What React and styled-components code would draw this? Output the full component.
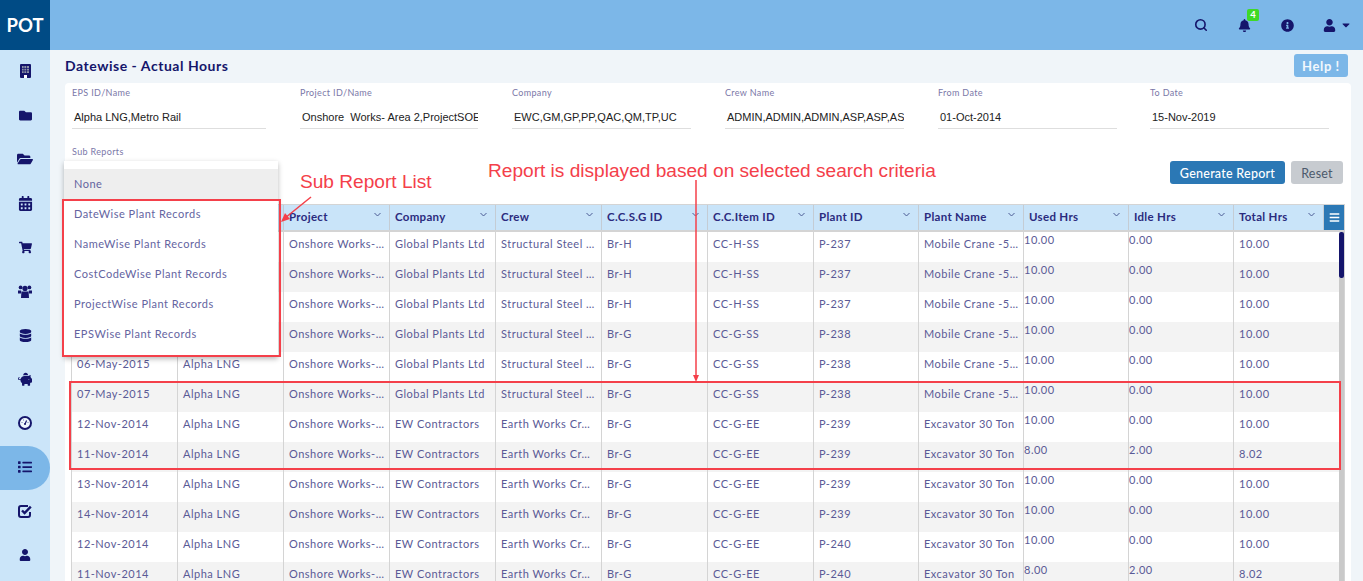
import React from 'react';
import styled, { createGlobalStyle } from 'styled-components';
import {
  FaBell, FaBuilding, FaCalendarAlt, FaCaretDown, FaBars, FaDatabase, FaFolder, FaFolderOpen, FaInfoCircle,
  FaList, FaPiggyBank, FaShoppingCart, FaUser,
} from 'react-icons/fa';
import { Search } from 'lucide-react';

const GlobalStyle = createGlobalStyle`
  html, body { margin: 0; padding: 0; height: 100%; overflow: hidden; }
  body { font-family: Lato, "Open Sans", sans-serif; background: #f0f5f9; }
  #root { height: 100%; }
  * { box-sizing: border-box; }
`;

const Page = styled.div`
  position: relative;
  width: 1363px;
  height: 581px;
  overflow: hidden;
  display: grid;
  grid-template-columns: 50px 1fr;
  grid-template-rows: 50px 1fr;
`;

const Logo = styled.div`
  background: #004b85;
  color: #fff;
  font-size: 18.5px;
  font-weight: 700;
  display: flex;
  align-items: center;
  justify-content: center;
`;

const TopBar = styled.header`
  background: #7cb7e8;
  color: #15156b;
  display: flex;
  align-items: center;
  justify-content: flex-end;
  padding-right: 11px;
`;

const TopIcon = styled.span`
  position: relative;
  display: flex;
  align-items: center;
  margin-left: ${p => p.$gap}px;
  font-size: 13px;
`;

const Caret = styled(FaCaretDown)`
  margin-left: 4px;
  font-size: 12px;
`;

const Badge = styled.span`
  position: absolute;
  top: -10px;
  left: 9px;
  width: 12px;
  height: 12px;
  background: #3fd926;
  border-radius: 2px;
  color: #fff;
  font-size: 9.5px;
  font-weight: 700;
  text-align: center;
  line-height: 11px;
`;

const Sidebar = styled.nav`
  background: #cbe5f9;
  display: flex;
  flex-direction: column;
`;

const SideItem = styled.div`
  height: 44px;
  flex-shrink: 0;
  display: flex;
  align-items: center;
  justify-content: center;
  padding-bottom: 2px;
  color: #15156b;
  font-size: ${p => p.$size}px;
  border-radius: 0 22px 22px 0;
  background: ${p => (p.$active ? '#7cb7e8' : 'transparent')};
`;

const Content = styled.main`
  min-width: 0;
  padding: 0 12px 0 15px;
  display: flex;
  flex-direction: column;
`;

const TitleRow = styled.div`
  height: 33px;
  display: flex;
  align-items: flex-start;
  justify-content: space-between;
  padding-right: 3px;
`;

const Title = styled.h1`
  margin: 7px 0 0;
  font-size: 14px;
  line-height: 17px;
  font-weight: 700;
  letter-spacing: 0.53px;
  color: #15156b;
`;

const HelpButton = styled.button`
  margin-top: 4px;
  width: 54px;
  height: 23px;
  border: 0;
  border-radius: 3px;
  background: #7cb7e8;
  color: #f2f8fd;
  font: 700 13px Lato, sans-serif;
  letter-spacing: 0.6px;
  padding: 0;
`;

const Panel = styled.section`
  background: #fff;
  border-radius: 4px 4px 0 0;
  flex: 1;
  min-height: 0;
  padding: 0 0 1px 6px;
  display: flex;
  flex-direction: column;
`;

const Filters = styled.div`
  display: flex;
  height: 52px;
  padding-left: 1px;
`;

const Filter = styled.div`
  width: ${p => p.$width}px;
  margin-right: ${p => p.$gap}px;
  padding-top: 4px;
`;

const FilterLabel = styled.div`
  font-size: 9px;
  line-height: 11px;
  letter-spacing: 0.35px;
  color: #7b78a8;
`;

const FilterValue = styled.div`
  margin-top: 7px;
  height: 24px;
  padding-left: 2px;
  border-bottom: 1px solid #dedede;
  font: 11px/24px "Liberation Sans", Arial, sans-serif;
  color: #222;
  white-space: pre;
  overflow: hidden;
`;

const SubRow = styled.div`
  height: 69px;
  display: flex;
  justify-content: space-between;
  padding-right: 8px;
`;

const SubLabel = styled(FilterLabel)`
  padding-top: 11px;
  padding-left: 1px;
`;

const Actions = styled.div`
  display: flex;
  gap: 6px;
  padding-top: 26px;
`;

const Button = styled.button`
  height: 23px;
  border: 0;
  border-radius: 3px;
  font: 12.5px Lato, sans-serif;
  letter-spacing: 0.25px;
  padding: 1px 0 0;
  width: ${p => p.$width}px;
  background: ${p => (p.$primary ? '#2b78b5' : '#c7cbd0')};
  color: ${p => (p.$primary ? '#fff' : '#4c5a6c')};
  font-weight: ${p => (p.$primary ? 500 : 400)};
`;

const Grid = styled.div`
  position: relative;
  flex: 1;
  min-height: 0;
  border: 1px solid #d4d4d4;
  overflow: hidden;
  width: 1274px;
`;

const HeadRow = styled.div`
  display: grid;
  grid-template-columns: ${p => p.$cols};
  height: 27px;
  background: #c9e4f9;
  border-bottom: 2px solid #d4d4d4;
`;

const HeadCell = styled.div`
  position: relative;
  padding-left: 5px;
  font-size: 11.5px;
  font-weight: 700;
  letter-spacing: 0.3px;
  line-height: 24px;
  color: #2b2b7e;
  border-right: 1px solid #c4ccd4;
  white-space: nowrap;
  overflow: hidden;
`;

const HeadChevron = styled.svg`
  position: absolute;
  top: 7px;
  right: 8px;
  width: 7px;
  height: 5px;
  fill: none;
  stroke: #4a5a94;
  stroke-width: 1;
`;

const MenuCell = styled.div`
  background: #2b78b5;
  color: #fff;
  font-size: 11px;
  display: flex;
  align-items: center;
  justify-content: center;
`;

const BodyRow = styled.div`
  display: grid;
  grid-template-columns: ${p => p.$cols};
  height: 30px;
  background: ${p => (p.$odd ? '#f3f3f3' : '#fff')};
`;

const Cell = styled.div`
  padding-left: ${p => (p.$top ? 0 : 5)}px;
  font-size: 11px;
  letter-spacing: 0.5px;
  line-height: ${p => (p.$top ? 15 : 24)}px;
  color: #5a5a96;
  border-right: 1px solid #d4d4d4;
  white-space: nowrap;
  overflow: hidden;
`;

const ScrollThumb = styled.div`
  position: absolute;
  top: 27px;
  right: 0;
  width: 5px;
  height: 46px;
  border-radius: 2px;
  background: #15156b;
`;

const ScrollTrack = styled.div`
  position: absolute;
  top: 73px;
  right: 0;
  bottom: 0;
  width: 5px;
  background: #c9c9c9;
`;

const Dropdown = styled.div`
  position: absolute;
  left: 64px;
  top: 161px;
  width: 214px;
  padding: 8px 0;
  background: #fff;
  box-shadow: 0 2px 5px rgba(0, 0, 0, 0.28);
`;

const DropItem = styled.div`
  height: 30px;
  padding-left: 10px;
  font-size: 11px;
  letter-spacing: 0.5px;
  line-height: 30px;
  color: #64649f;
  background: ${p => (p.$selected ? '#eeeeee' : 'transparent')};
`;

const RedBox = styled.div`
  position: absolute;
  left: ${p => p.$x}px;
  top: ${p => p.$y}px;
  width: ${p => p.$w}px;
  height: ${p => p.$h}px;
  border: 2px solid #f4404a;
`;

const Note = styled.div`
  position: absolute;
  left: ${p => p.$x}px;
  top: ${p => p.$y}px;
  font: 19.1px/20px "Liberation Sans", Arial, sans-serif;
  color: #f4404a;
  white-space: nowrap;
`;

const ArrowLayer = styled.svg`
  position: absolute;
  left: 0;
  top: 0;
  width: 1363px;
  height: 581px;
  pointer-events: none;
`;

const BuildingIcon = () => (
  <svg width="11" height="14" viewBox="0 0 11 14">
    <rect width="11" height="14" rx="1" fill="#15156b" />
    <rect x="2" y="2" width="7" height="7" fill="#8d93a8" />
    <path d="M4 2v7M6.5 2v7M2 4.5h7M2 6.8h7" stroke="#15156b" strokeWidth="0.7" />
    <rect x="4" y="11" width="3" height="3" fill="#fff" />
  </svg>
);

const UsersIcon = () => (
  <svg width="14" height="13" viewBox="0 0 14 13" fill="#15156b">
    <circle cx="2.6" cy="2.4" r="1.9" />
    <circle cx="11.4" cy="2.4" r="1.9" />
    <circle cx="7" cy="3.4" r="2.6" />
    <path d="M0 5.4h3.2L3 8.6H0zM14 5.4h-3.2l.2 3.2h3z" />
    <path d="M3.4 6.6h7.2l.4 6.4H3z" />
  </svg>
);

const GaugeIcon = () => (
  <svg width="14" height="14" viewBox="0 0 14 14">
    <circle cx="7" cy="7" r="6" fill="#eef6fc" stroke="#15156b" strokeWidth="2" />
    <path d="M7 8l1.6-3.4" stroke="#15156b" strokeWidth="1.2" />
    <circle cx="7" cy="8" r="1" fill="#15156b" />
    <path d="M3.5 6.5h1M5 4h1M9.5 6.5h1" stroke="#6b7cae" strokeWidth="1" />
  </svg>
);

const CheckIcon = () => (
  <svg width="14" height="14" viewBox="0 0 14 14" fill="none" stroke="#15156b">
    <path d="M10 2H3a2 2 0 0 0-2 2v7a2 2 0 0 0 2 2h7a2 2 0 0 0 2-2V8" strokeWidth="2" />
    <path d="M4 6.5l2.6 2.6L12.8 2.6" strokeWidth="2.4" />
  </svg>
);

const sideIcons = [
  { Icon: BuildingIcon },
  { Icon: FaFolder, size: 13 },
  { Icon: FaFolderOpen, size: 16 },
  { Icon: FaCalendarAlt, size: 15 },
  { Icon: FaShoppingCart, size: 13 },
  { Icon: UsersIcon },
  { Icon: FaDatabase, size: 13 },
  { Icon: FaPiggyBank, size: 14.5 },
  { Icon: GaugeIcon },
  { Icon: FaList, size: 14 },
  { Icon: CheckIcon },
  { Icon: FaUser, size: 12 },
];

const filters = [
  { label: 'EPS ID/Name', value: 'Alpha LNG,Metro Rail', width: 194, gap: 34 },
  { label: 'Project ID/Name', value: 'Onshore  Works- Area 2,ProjectSOE', width: 178, gap: 34 },
  { label: 'Company', value: 'EWC,GM,GP,PP,QAC,QM,TP,UC', width: 179, gap: 34 },
  { label: 'Crew Name', value: 'ADMIN,ADMIN,ADMIN,ASP,ASP,ASP', width: 179, gap: 34 },
  { label: 'From Date', value: '01-Oct-2014', width: 179, gap: 33 },
  { label: 'To Date', value: '15-Nov-2019', width: 179, gap: 0 },
];

const cols = '106px 106px 106px 106px 106px 106px 106px 105px 105px 105px 105px 90px 1fr';
const bodyCols = '106px 106px 106px 106px 106px 106px 106px 105px 105px 105px 105px 1fr';

// the first two headers sit under the open dropdown
const heads = ['', '', 'Project', 'Company', 'Crew', 'C.C.S.G ID', 'C.C.Item ID', 'Plant ID', 'Plant Name', 'Used Hrs', 'Idle Hrs', 'Total Hrs'];

const gp = ['Global Plants Ltd', 'Structural Steel …'];
const ew = ['EW Contractors', 'Earth Works Cr…'];
const crane = 'Mobile Crane -5…';
const excav = 'Excavator 30 Ton';

// first four rows sit under the open dropdown, their date and EPS are not visible
const rows = [
  ['', ...gp, 'Br-H', 'CC-H-SS', 'P-237', crane, '10.00', '0.00', '10.00'],
  ['', ...gp, 'Br-H', 'CC-H-SS', 'P-237', crane, '10.00', '0.00', '10.00'],
  ['', ...gp, 'Br-H', 'CC-H-SS', 'P-237', crane, '10.00', '0.00', '10.00'],
  ['', ...gp, 'Br-G', 'CC-G-SS', 'P-238', crane, '10.00', '0.00', '10.00'],
  ['06-May-2015', ...gp, 'Br-G', 'CC-G-SS', 'P-238', crane, '10.00', '0.00', '10.00'],
  ['07-May-2015', ...gp, 'Br-G', 'CC-G-SS', 'P-238', crane, '10.00', '0.00', '10.00'],
  ['12-Nov-2014', ...ew, 'Br-G', 'CC-G-EE', 'P-239', excav, '10.00', '0.00', '10.00'],
  ['11-Nov-2014', ...ew, 'Br-G', 'CC-G-EE', 'P-239', excav, '8.00', '2.00', '8.02'],
  ['13-Nov-2014', ...ew, 'Br-G', 'CC-G-EE', 'P-239', excav, '10.00', '0.00', '10.00'],
  ['14-Nov-2014', ...ew, 'Br-G', 'CC-G-EE', 'P-239', excav, '10.00', '0.00', '10.00'],
  ['12-Nov-2014', ...ew, 'Br-G', 'CC-G-EE', 'P-240', excav, '10.00', '0.00', '10.00'],
  ['11-Nov-2014', ...ew, 'Br-G', 'CC-G-EE', 'P-240', excav, '8.00', '2.00', '8.02'],
];

const subReports = ['DateWise Plant Records', 'NameWise Plant Records', 'CostCodeWise Plant Records', 'ProjectWise Plant Records', 'EPSWise Plant Records'];

const App = () => {
  return (
    <Page>
      <GlobalStyle />
      <Logo>POT</Logo>
      <TopBar>
        <TopIcon $gap={0}><Search size={14} strokeWidth={2.8} /></TopIcon>
        <TopIcon $gap={30}><FaBell /><Badge>4</Badge></TopIcon>
        <TopIcon $gap={30}><FaInfoCircle /></TopIcon>
        <TopIcon $gap={29}><FaUser /><Caret /></TopIcon>
      </TopBar>
      <Sidebar>
        {sideIcons.map(({ Icon, size }, i) => (
          <SideItem key={i} $active={i === 9} $size={size || 13}><Icon /></SideItem>
        ))}
      </Sidebar>
      <Content>
        <TitleRow>
          <Title>Datewise - Actual Hours</Title>
          <HelpButton>Help !</HelpButton>
        </TitleRow>
        <Panel>
          <Filters>
            {filters.map(f => (
              <Filter key={f.label} $width={f.width} $gap={f.gap}>
                <FilterLabel>{f.label}</FilterLabel>
                <FilterValue>{f.value}</FilterValue>
              </Filter>
            ))}
          </Filters>
          <SubRow>
            <SubLabel>Sub Reports</SubLabel>
            <Actions>
              <Button $primary $width={115}>Generate Report</Button>
              <Button $width={52}>Reset</Button>
            </Actions>
          </SubRow>
          <Grid>
            <HeadRow $cols={cols}>
              {heads.map((h, i) => (
                <HeadCell key={i}>
                  {h}
                  <HeadChevron viewBox="0 0 7 5"><path d="M.5 1l3 3 3-3" /></HeadChevron>
                </HeadCell>
              ))}
              <MenuCell><FaBars /></MenuCell>
            </HeadRow>
            {rows.map((r, i) => (
              <BodyRow key={i} $cols={bodyCols} $odd={i % 2 === 1}>
                <Cell>{r[0]}</Cell>
                <Cell>{r[0] && 'Alpha LNG'}</Cell>
                <Cell>Onshore Works-…</Cell>
                {r.slice(1, 7).map((v, j) => <Cell key={j}>{v}</Cell>)}
                <Cell $top>{r[7]}</Cell>
                <Cell $top>{r[8]}</Cell>
                <Cell>{r[9]}</Cell>
              </BodyRow>
            ))}
            <ScrollTrack />
            <ScrollThumb />
          </Grid>
        </Panel>
      </Content>

      <Dropdown>
        <DropItem $selected>None</DropItem>
        {subReports.map(s => <DropItem key={s}>{s}</DropItem>)}
      </Dropdown>

      <RedBox $x={62} $y={199} $w={219} $h={158} />
      <RedBox $x={69} $y={381} $w={1272} $h={89} />
      <Note $x={300} $y={172}>Sub Report List</Note>
      <Note $x={488} $y={161}>Report is displayed based on selected search criteria</Note>
      <ArrowLayer viewBox="0 0 1363 581">
        <line x1="311" y1="197" x2="285" y2="218" stroke="#f4404a" strokeWidth="1.5" />
        <polygon points="281,222 285,213 290,219" fill="#f4404a" />
        <line x1="696" y1="180" x2="696" y2="376" stroke="#f4404a" strokeWidth="1.5" />
        <polygon points="696,382 693,375 699,375" fill="#f4404a" />
      </ArrowLayer>
    </Page>
  );
};

export default App;
